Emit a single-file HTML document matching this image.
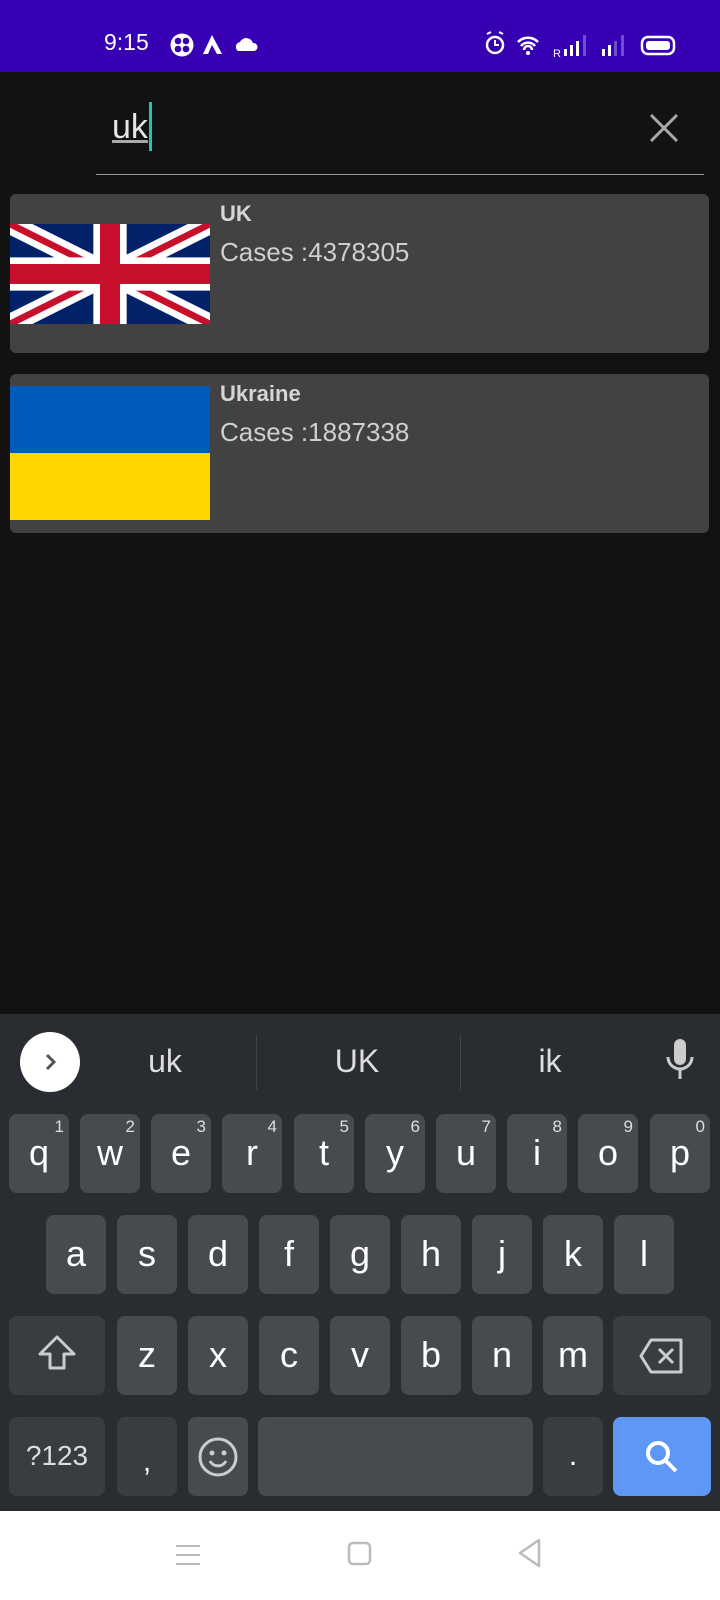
<!DOCTYPE html>
<html><head><meta charset="utf-8"><style>
*{margin:0;padding:0;box-sizing:border-box}
body{width:720px;height:1600px;background:#121212;font-family:"Liberation Sans",sans-serif;position:relative;overflow:hidden}
.abs{position:absolute}
.sb{left:0;top:0;width:720px;height:72px;background:#3700b3;color:#fff}
.card{left:10px;width:699px;height:159px;background:#424242;border-radius:6px}
.t1{color:#d6d6d6;font-weight:bold;font-size:22px}
.t2{color:#cfcfcf;font-size:26px}
.kb{left:0;top:1014px;width:720px;height:497px;background:#292d32}
.k{position:absolute;width:60px;height:79px;background:#474b50;border-radius:8px;color:#fff;font-size:36px;text-align:center;line-height:78px}
.k sup{position:absolute;right:5px;top:3px;font-size:17px;line-height:20px;color:#ddd}
.s{background:#393d42}
.nav{left:0;top:1511px;width:720px;height:89px;background:#fff}
</style></head><body>
<div class="abs sb">
 <div class="abs" style="left:104px;top:29px;font-size:23px">9:15</div>
 <svg class="abs" style="left:168px;top:33px" width="110" height="26" viewBox="0 0 110 26">
  <circle cx="14" cy="12" r="11.5" fill="#fff"/>
  <g fill="#3700b3"><circle cx="10" cy="8" r="3.3"/><circle cx="18" cy="8" r="3.3"/><circle cx="10" cy="16" r="3.3"/><circle cx="18" cy="16" r="3.3"/></g>
  <path d="M44 2 L35 21 H40 L44 12 L49 21 H54 Z" fill="#fff"/>
  <path d="M70 18 a5 5 0 0 1 2-9 a7 7 0 0 1 13 1 a4 4 0 0 1 1 8 Z" fill="#fff"/>
 </svg>
 <svg class="abs" style="left:480px;top:30px" width="200" height="30" viewBox="0 0 200 30">
  <circle cx="15" cy="15" r="8" fill="none" stroke="#fff" stroke-width="2.5"/><path d="M15 10v5h4" stroke="#fff" stroke-width="2" fill="none"/>
  <path d="M7 4l4-2M23 4l-4-2" stroke="#fff" stroke-width="2"/>
  <path d="M38 12a14 14 0 0 1 20 0M41 16a9 9 0 0 1 14 0M44 20a4 4 0 0 1 8 0" stroke="#fff" stroke-width="2.5" fill="none"/><circle cx="48" cy="23" r="2" fill="#fff"/>
  <text x="73" y="27" font-size="11" fill="#fff" font-family="Liberation Sans">R</text>
  <rect x="84" y="19" width="3" height="7" fill="#fff"/><rect x="90" y="15" width="3" height="11" fill="#fff"/><rect x="96" y="11" width="3" height="15" fill="#fff"/><rect x="103" y="5" width="3" height="21" fill="#6a4fd0"/>
  <rect x="122" y="19" width="3" height="7" fill="#fff"/><rect x="128" y="15" width="3" height="11" fill="#fff"/><rect x="134" y="11" width="3" height="15" fill="#6a4fd0"/><rect x="141" y="5" width="3" height="21" fill="#6a4fd0"/>
  <rect x="162" y="7" width="32" height="17" rx="6" fill="none" stroke="#fff" stroke-width="2.5"/><rect x="166" y="11" width="24" height="9" rx="3" fill="#fff"/>
 </svg>
</div>
<div class="abs" style="left:112px;top:108px;font-size:34px;color:#e6e6e6;text-decoration:underline;text-decoration-color:#aaa">uk</div>
<div class="abs" style="left:149px;top:102px;width:3px;height:49px;background:#1fc9a8"></div>
<svg class="abs" style="left:648px;top:112px" width="32" height="32"><path d="M3 3L29 29M29 3L3 29" stroke="#a8a8a8" stroke-width="3"/></svg>
<div class="abs" style="left:96px;top:174px;width:608px;height:1px;background:#9a9a9a"></div>

<div class="abs card" style="top:194px"></div>
<svg class="abs" style="left:10px;top:224px" width="200" height="100" viewBox="0 0 60 30" preserveAspectRatio="none">
 <rect width="60" height="30" fill="#012169"/>
 <path d="M0 0L60 30M60 0L0 30" stroke="#fff" stroke-width="6"/>
 <path d="M0 0L60 30M60 0L0 30" stroke="#C8102E" stroke-width="2"/>
 <path d="M30 0V30M0 15H60" stroke="#fff" stroke-width="10"/>
 <path d="M30 0V30M0 15H60" stroke="#C8102E" stroke-width="6"/>
</svg>
<div class="abs t1" style="left:220px;top:201px">UK</div>
<div class="abs t2" style="left:220px;top:237px">Cases :4378305</div>

<div class="abs card" style="top:374px"></div>
<div class="abs" style="left:10px;top:386px;width:200px;height:67px;background:#005bbb"></div>
<div class="abs" style="left:10px;top:453px;width:200px;height:67px;background:#ffd500"></div>
<div class="abs t1" style="left:220px;top:381px">Ukraine</div>
<div class="abs t2" style="left:220px;top:417px">Cases :1887338</div>

<div class="abs kb">
 <div class="abs" style="left:20px;top:18px;width:60px;height:60px;border-radius:50%;background:#fff"></div>
 <svg class="abs" style="left:38px;top:36px" width="24" height="24"><path d="M9 5l7 7-7 7" stroke="#555" stroke-width="3" fill="none"/></svg>
 <div class="abs" style="left:115px;top:29px;width:100px;text-align:center;color:#ddd;font-size:32px">uk</div>
 <div class="abs" style="left:256px;top:21px;width:1px;height:55px;background:#444"></div>
 <div class="abs" style="left:307px;top:29px;width:100px;text-align:center;color:#ddd;font-size:32px">UK</div>
 <div class="abs" style="left:460px;top:21px;width:1px;height:55px;background:#444"></div>
 <div class="abs" style="left:500px;top:29px;width:100px;text-align:center;color:#ddd;font-size:32px">ik</div>
 <svg class="abs" style="left:662px;top:23px" width="36" height="50"><rect x="12" y="2" width="12" height="26" rx="6" fill="#ccc"/><path d="M6 20a12 12 0 0 0 24 0M18 32v10" stroke="#ccc" stroke-width="3" fill="none"/></svg>
</div>
<div class="abs" style="left:0;top:0;width:720px">
 <div class="k" style="left:9px;top:1114px">q<sup>1</sup></div>
 <div class="k" style="left:80px;top:1114px">w<sup>2</sup></div>
 <div class="k" style="left:151px;top:1114px">e<sup>3</sup></div>
 <div class="k" style="left:222px;top:1114px">r<sup>4</sup></div>
 <div class="k" style="left:294px;top:1114px">t<sup>5</sup></div>
 <div class="k" style="left:365px;top:1114px">y<sup>6</sup></div>
 <div class="k" style="left:436px;top:1114px">u<sup>7</sup></div>
 <div class="k" style="left:507px;top:1114px">i<sup>8</sup></div>
 <div class="k" style="left:578px;top:1114px">o<sup>9</sup></div>
 <div class="k" style="left:650px;top:1114px">p<sup>0</sup></div>
 <div class="k" style="left:46px;top:1215px">a</div>
 <div class="k" style="left:117px;top:1215px">s</div>
 <div class="k" style="left:188px;top:1215px">d</div>
 <div class="k" style="left:259px;top:1215px">f</div>
 <div class="k" style="left:330px;top:1215px">g</div>
 <div class="k" style="left:401px;top:1215px">h</div>
 <div class="k" style="left:472px;top:1215px">j</div>
 <div class="k" style="left:543px;top:1215px">k</div>
 <div class="k" style="left:614px;top:1215px">l</div>
 <div class="k s" style="left:9px;top:1316px;width:96px"><svg width="44" height="44" style="margin-top:17px"><path d="M22 4L5 21h10v14h14V21h10z" fill="none" stroke="#ccc" stroke-width="3" stroke-linejoin="round"/></svg></div>
 <div class="k" style="left:117px;top:1316px">z</div>
 <div class="k" style="left:188px;top:1316px">x</div>
 <div class="k" style="left:259px;top:1316px">c</div>
 <div class="k" style="left:330px;top:1316px">v</div>
 <div class="k" style="left:401px;top:1316px">b</div>
 <div class="k" style="left:472px;top:1316px">n</div>
 <div class="k" style="left:543px;top:1316px">m</div>
 <div class="k s" style="left:613px;top:1316px;width:98px"><svg width="46" height="40" style="margin-top:20px"><path d="M12 4H42V36H12L2 20Z" fill="none" stroke="#ccc" stroke-width="3" stroke-linejoin="round"/><path d="M20 13l14 14M34 13L20 27" stroke="#ccc" stroke-width="3"/></svg></div>
 <div class="k s" style="left:9px;top:1417px;width:96px;font-size:28px;color:#ddd">?123</div>
 <div class="k s" style="left:117px;top:1417px;font-size:30px;line-height:90px">,</div>
 <div class="k" style="left:188px;top:1417px"><svg width="42" height="42" style="margin-top:19px"><circle cx="21" cy="21" r="18" fill="none" stroke="#ccc" stroke-width="3"/><circle cx="15" cy="17" r="2.5" fill="#ccc"/><circle cx="27" cy="17" r="2.5" fill="#ccc"/><path d="M13 25a9 9 0 0 0 16 0" stroke="#ccc" stroke-width="3" fill="none"/></svg></div>
 <div class="k" style="left:258px;top:1417px;width:275px"></div>
 <div class="k s" style="left:543px;top:1417px;font-size:30px">.</div>
 <div class="k" style="left:613px;top:1417px;width:98px;background:#5e97f6"><svg width="40" height="40" style="margin-top:20px"><circle cx="16" cy="16" r="10" fill="none" stroke="#fff" stroke-width="4"/><path d="M23 23l11 11" stroke="#fff" stroke-width="4"/></svg></div>
</div>
<div class="abs nav">
 <svg class="abs" style="left:170px;top:30px" width="40" height="30"><path d="M6 5h24M6 14h24M6 23h24" stroke="#bbb" stroke-width="2"/></svg>
 <svg class="abs" style="left:345px;top:28px" width="30" height="30"><rect x="4" y="4" width="21" height="21" rx="4" fill="none" stroke="#bbb" stroke-width="2.5"/></svg>
 <svg class="abs" style="left:515px;top:26px" width="30" height="34"><path d="M24 3L5 16l19 13z" fill="none" stroke="#bbb" stroke-width="2.5" stroke-linejoin="round"/></svg>
</div>
</body></html>
